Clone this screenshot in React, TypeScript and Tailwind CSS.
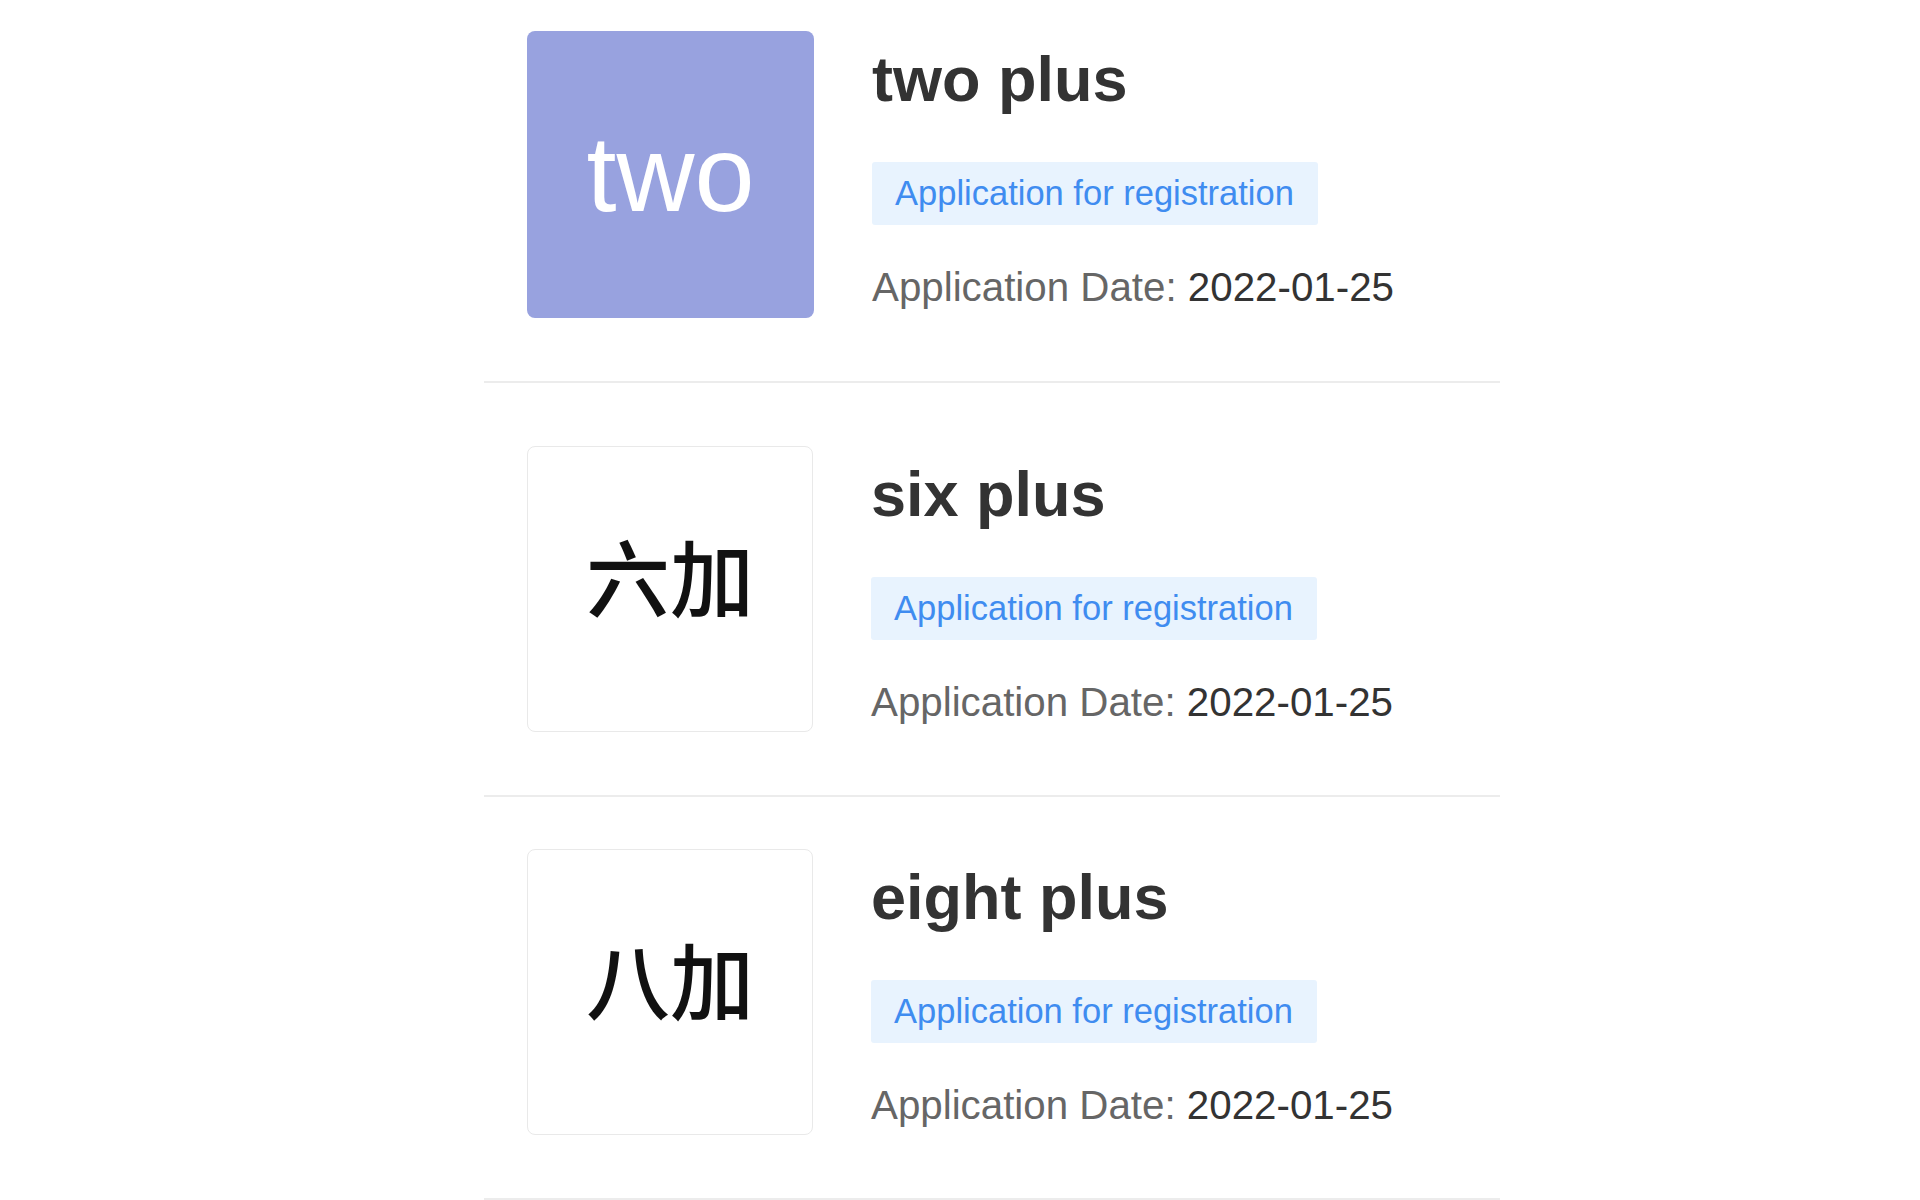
import React from "react";

type Item = {
  title: string;
  thumb: string;
  purple?: boolean;
  pt: string;
};

const items: Item[] = [
  { title: "two plus", thumb: "two", purple: true, pt: "pt-[31px]" },
  { title: "six plus", thumb: "六加", pt: "pt-[63px]" },
  { title: "eight plus", thumb: "八加", pt: "pt-[52px]" },
];

function Row({ item }: { item: Item }) {
  return (
    <div className={`${item.pt} pb-[63px] border-b-2 border-[#ececec]`}>
      <div className="flex pl-[43px]">
        {item.purple ? (
          <div className="w-[287px] h-[287px] shrink-0 rounded-lg bg-[#98a2df] flex items-center justify-center">
            <span
              className="text-white text-[108px] leading-none pb-[2px]"
              style={{ fontFamily: '"Liberation Sans", Arial, sans-serif' }}
            >
              {item.thumb}
            </span>
          </div>
        ) : (
          <div className="w-[286px] h-[286px] shrink-0 rounded-lg bg-white border-[1.5px] border-[#e9e9e9] flex items-center justify-center">
            <span
              className="text-[#111] text-[84px] font-medium leading-none pb-[28px]"
              style={{ fontFamily: '"Noto Sans CJK SC", "Noto Sans", sans-serif' }}
            >
              {item.thumb}
            </span>
          </div>
        )}
        <div
          className="ml-[58px] flex flex-col items-start"
          style={{ fontFamily: '"Liberation Sans", Arial, sans-serif' }}
        >
          <div className="mt-[11px] text-[63px] leading-[74px] font-bold text-[#333333]">
            {item.title}
          </div>
          <div className="mt-[46px] bg-[#e8f3fe] rounded-[3px] pl-[23px] pr-[24px] pt-[11px] pb-[12px] text-[34.5px] leading-[40px] text-[#3f8cf0]">
            Application for registration
          </div>
          <div className="mt-[39px] text-[40.3px] leading-[48px]">
            <span className="text-[#666666]">Application Date: </span>
            <span className="text-[#333333]">2022-01-25</span>
          </div>
        </div>
      </div>
    </div>
  );
}

export default function App() {
  return (
    <div className="w-[1920px] h-[1200px] bg-white overflow-hidden">
      <div className="ml-[484px] w-[1016px]">
        {items.map((it) => (
          <Row key={it.title} item={it} />
        ))}
      </div>
    </div>
  );
}
